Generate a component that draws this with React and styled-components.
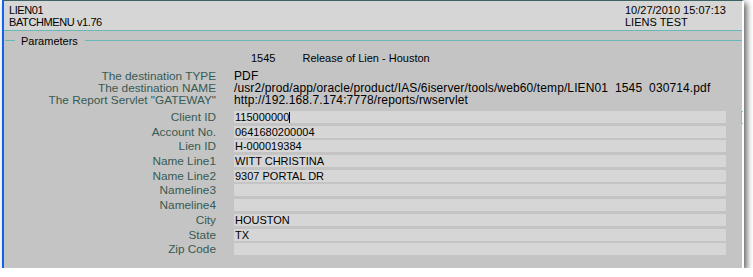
import React from 'react'
import styled, { createGlobalStyle } from 'styled-components'

const GlobalStyle = createGlobalStyle`
  body {
    margin: 0;
    background: #ffffff;
    font-family: "Liberation Sans", Arial, sans-serif;
  }
`

const info = [
  ['The destination TYPE', 'PDF'],
  ['The destination NAME', '/usr2/prod/app/oracle/product/IAS/6iserver/tools/web60/temp/LIEN01  1545  030714.pdf'],
  ['The Report Servlet "GATEWAY"', 'http://192.168.7.174:7778/reports/rwservlet'],
]

const fields = [
  ['Client ID', '115000000', true],
  ['Account No.', '0641680200004'],
  ['Lien ID', 'H-000019384'],
  ['Name Line1', 'WITT CHRISTINA'],
  ['Name Line2', '9307 PORTAL DR'],
  ['Nameline3', ''],
  ['Nameline4', ''],
  ['City', 'HOUSTON'],
  ['State', 'TX'],
  ['Zip Code', ''],
]

export default function App() {
  return (
    <>
      <GlobalStyle />
      <Window>
        <Header>
          <HeadCol>
            <span>LIEN01</span>
            <span>BATCHMENU v1.76</span>
          </HeadCol>
          <HeadCol right>
            <span>10/27/2010 15:07:13</span>
            <span>LIENS TEST</span>
          </HeadCol>
        </Header>

        <Legend>
          <LegendLine short />
          <LegendText>Parameters</LegendText>
          <LegendLine />
        </Legend>

        <Title>
          <span>1545</span>
          <span>Release of Lien - Houston</span>
        </Title>

        <InfoGrid>
          {info.map(([label, value]) => (
            <React.Fragment key={label}>
              <Label>{label}</Label>
              <InfoValue>{value}</InfoValue>
            </React.Fragment>
          ))}
        </InfoGrid>

        <FieldGrid>
          {fields.map(([label, value, focused]) => (
            <React.Fragment key={label}>
              <Label>{label}</Label>
              <Box>
                {value}
                {focused && <Caret />}
              </Box>
            </React.Fragment>
          ))}
        </FieldGrid>
        <FocusMark />
      </Window>
    </>
  )
}

const Window = styled.div`
  position: relative;
  margin-left: 2px;
  width: 738px;
  height: 267px;
  border-left: 2px solid #1262f2;
  border-top: 1px solid #3c6464;
  border-right: 2px solid #ffffff;
  background: #c4c4c4;
  box-shadow: 3px 3px 6px rgba(0, 0, 0, 0.6);
  display: flex;
  flex-direction: column;
`

const Header = styled.div`
  display: flex;
  justify-content: space-between;
  height: 26px;
  padding: 3px 0 0 5px;
  background: #d6d6d6;
  border-bottom: 1px solid #68b8b8;
  font-size: 11px;
  line-height: 12px;
  color: #000;
`

const HeadCol = styled.div`
  display: flex;
  flex-direction: column;
  width: ${p => (p.right ? '117px' : 'auto')};
  letter-spacing: ${p => (p.right ? '0' : '-0.4px')};
`

const Legend = styled.div`
  display: flex;
  align-items: center;
  height: 13px;
  margin-top: 3px;
`

const LegendLine = styled.div`
  height: 1px;
  background: #68b8b8;
  flex: ${p => (p.short ? '0 0 10px' : '1')};
  margin-left: ${p => (p.short ? '1px' : '0')};
`

const LegendText = styled.span`
  font-size: 11px;
  padding: 0 7px 0 6px;
  color: #000;
`

const Title = styled.div`
  display: flex;
  gap: 27px;
  padding-left: 247px;
  margin-top: 5px;
  font-size: 11px;
  line-height: 12px;
  color: #000;
`

const InfoGrid = styled.div`
  display: grid;
  grid-template-columns: 212px 1fr;
  column-gap: 18px;
  margin-top: 6px;
  font-size: 12px;
  line-height: 12px;
`

const Label = styled.div`
  text-align: right;
  color: #375a52;
  font-size: 11.8px;
  line-height: 12px;
  align-self: center;
  white-space: nowrap;
`

const InfoValue = styled.div`
  color: #000;
  white-space: pre;
  letter-spacing: 0.12px;
`

const FieldGrid = styled.div`
  display: grid;
  grid-template-columns: 212px 492px;
  column-gap: 18px;
  row-gap: 2.7px;
  margin-top: 5px;
`

const Box = styled.div`
  height: 12px;
  background: #d6d6d6;
  font-size: 11px;
  line-height: 12px;
  color: #000;
  padding-left: 1px;
  white-space: pre;
  display: flex;
  align-items: center;
`

const Caret = styled.span`
  display: inline-block;
  width: 1px;
  height: 11px;
  background: #000;
`

const FocusMark = styled.div`
  position: absolute;
  right: -1px;
  top: 110px;
  width: 1px;
  height: 11px;
  border: 1px solid #7cc4c4;
  border-right: none;
`
